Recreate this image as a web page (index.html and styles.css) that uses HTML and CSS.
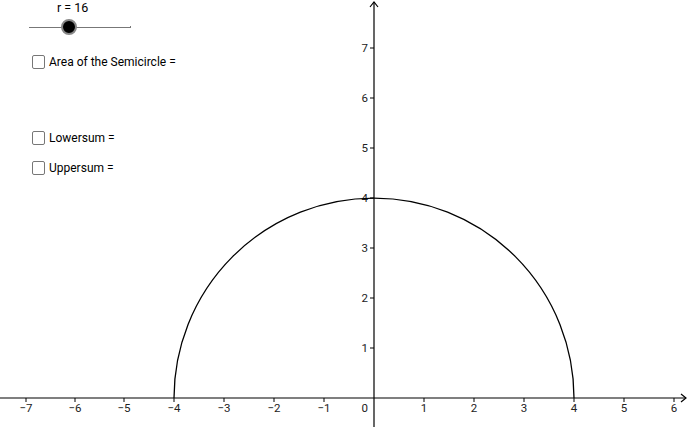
FILE: index.html
```html
<!DOCTYPE html>
<html>
<head>
<meta charset="utf-8">
<link rel="stylesheet" href="styles.css">
</head>
<body>
<div class="stage">
  <svg class="graph" width="688" height="427" viewBox="0 0 688 427" xmlns="http://www.w3.org/2000/svg">
    <g class="axes" stroke="#000" stroke-width="1.2" fill="none">
      <line x1="0" y1="398" x2="686" y2="398"/>
      <polyline points="681,394 686,398 681,402"/>
      <line x1="374" y1="2" x2="374" y2="427"/>
      <polyline points="370,7 374,2 378,7"/>
    </g>
    <g stroke="#000" stroke-width="1">
      <line x1="26" y1="398" x2="26" y2="402"/>
      <line x1="75" y1="398" x2="75" y2="402"/>
      <line x1="124" y1="398" x2="124" y2="402"/>
      <line x1="174" y1="398" x2="174" y2="402"/>
      <line x1="224" y1="398" x2="224" y2="402"/>
      <line x1="274" y1="398" x2="274" y2="402"/>
      <line x1="324" y1="398" x2="324" y2="402"/>
      <line x1="424" y1="398" x2="424" y2="402"/>
      <line x1="474" y1="398" x2="474" y2="402"/>
      <line x1="524" y1="398" x2="524" y2="402"/>
      <line x1="574" y1="398" x2="574" y2="402"/>
      <line x1="624" y1="398" x2="624" y2="402"/>
      <line x1="674" y1="398" x2="674" y2="402"/>
      <line x1="370" y1="348" x2="374" y2="348"/>
      <line x1="370" y1="298" x2="374" y2="298"/>
      <line x1="370" y1="248" x2="374" y2="248"/>
      <line x1="370" y1="198" x2="374" y2="198"/>
      <line x1="370" y1="148" x2="374" y2="148"/>
      <line x1="370" y1="98" x2="374" y2="98"/>
      <line x1="370" y1="48" x2="374" y2="48"/>
    </g>
    <g class="xlabels" text-anchor="middle">
      <text x="26" y="412">−7</text>
      <text x="75" y="412">−6</text>
      <text x="124" y="412">−5</text>
      <text x="174" y="412">−4</text>
      <text x="224" y="412">−3</text>
      <text x="274" y="412">−2</text>
      <text x="324" y="412">−1</text>
      <text x="424" y="412">1</text>
      <text x="474" y="412">2</text>
      <text x="524" y="412">3</text>
      <text x="574" y="412">4</text>
      <text x="624" y="412">5</text>
      <text x="674" y="412">6</text>
    </g>
    <g class="ylabels" text-anchor="end">
      <text x="368" y="412">0</text>
      <text x="368" y="352">1</text>
      <text x="368" y="302">2</text>
      <text x="368" y="252">3</text>
      <text x="368" y="202">4</text>
      <text x="368" y="152">5</text>
      <text x="368" y="102">6</text>
      <text x="368" y="52">7</text>
    </g>
    <path d="M174,398 A200,200 0 0 1 574,398" fill="none" stroke="#000" stroke-width="1.3"/>
  </svg>

  <div class="panel">
    <div class="slider">
      <div class="slider-label">r = 16</div>
      <div class="slider-track">
        <span class="slider-knob"></span>
        <span class="slider-end"></span>
      </div>
    </div>
    <label class="check check-area"><span class="box"></span>Area of the Semicircle =</label>
    <label class="check check-lower"><span class="box"></span>Lowersum =</label>
    <label class="check check-upper"><span class="box"></span>Uppersum =</label>
  </div>
</div>
</body>
</html>
```
FILE: styles.css
```css
* { box-sizing: border-box; }
html, body {
  margin: 0;
  padding: 0;
  background: #fff;
  width: 688px;
  height: 427px;
  overflow: hidden;
  font-family: Roboto, "Liberation Sans", sans-serif;
}
.stage {
  position: relative;
  width: 688px;
  height: 427px;
}
.graph {
  display: block;
}
.xlabels text, .ylabels text {
  font-family: Roboto, "Liberation Sans", sans-serif;
  font-size: 11.5px;
  fill: #222;
}
.panel {
  position: absolute;
  left: 0;
  top: 0;
  padding: 0 0 0 32px;
  display: flex;
  flex-direction: column;
}
.slider {
  position: relative;
  margin-left: -3px;
  width: 102px;
  height: 40px;
}
.slider-label {
  position: absolute;
  left: 28px;
  top: 0;
  font-size: 12.5px;
  color: #000;
  line-height: 15px;
}
.slider-track {
  position: absolute;
  left: 0;
  top: 26.5px;
  width: 102px;
  height: 1px;
  background: #777;
}
.slider-knob {
  position: absolute;
  left: 32px;
  top: -7.5px;
  width: 16px;
  height: 16px;
  border-radius: 50%;
  background: #000;
  border: 2.5px solid #888;
}
.slider-end {
  position: absolute;
  right: 0;
  top: -1px;
  width: 1px;
  height: 2px;
  background: #777;
}
.check {
  display: flex;
  align-items: center;
  font-size: 12px;
  color: #000;
  height: 14px;
  line-height: 14px;
}
.box {
  width: 13px;
  height: 14px;
  border: 1px solid #777;
  border-radius: 2px;
  margin-right: 4px;
  background: #fff;
}
.check-area { margin-top: 15px; }
.check-lower { margin-top: 62px; }
.check-upper { margin-top: 16px; }
```
